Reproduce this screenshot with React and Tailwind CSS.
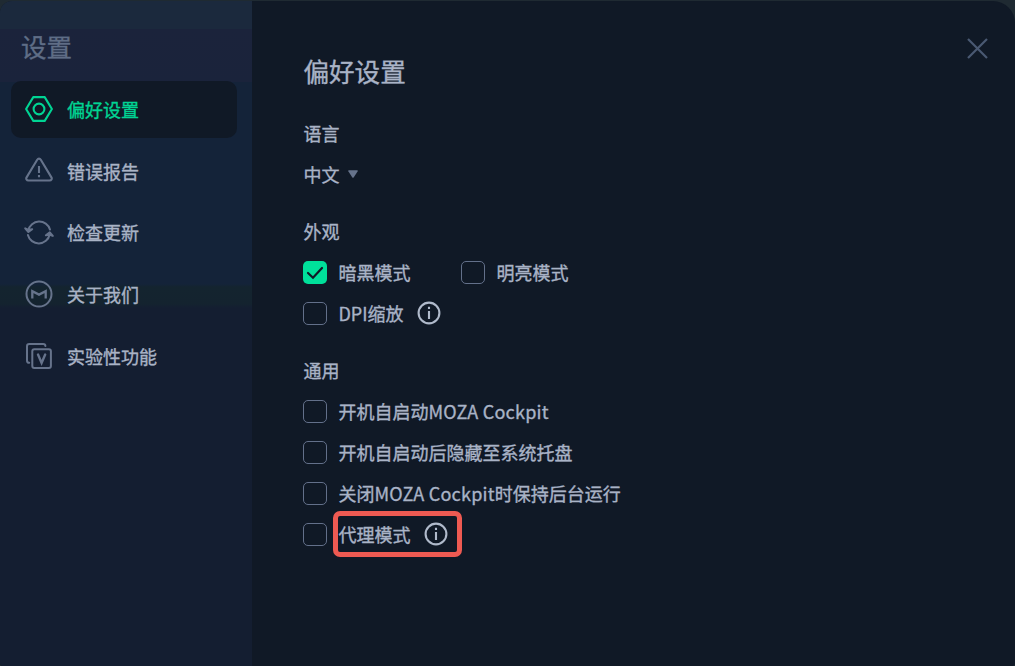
import { useState } from "react";

const MENU = [
  { id: "preferences", label: "偏好设置", Icon: HexIcon },
  { id: "report", label: "错误报告", Icon: WarningIcon },
  { id: "update", label: "检查更新", Icon: RefreshIcon },
  { id: "about", label: "关于我们", Icon: LogoIcon },
  { id: "labs", label: "实验性功能", Icon: LabsIcon },
];

function HexIcon() {
  return (
    <svg width="28" height="28" viewBox="0 0 28 28" fill="none" stroke="currentColor" strokeWidth="2.1" strokeLinejoin="round">
      <path d="M8.3 2.1h11.4L26.9 14l-7.2 11.9H8.3L1.1 14z" />
      <circle cx="14" cy="14" r="5.4" />
    </svg>
  );
}

function WarningIcon() {
  return (
    <svg width="28" height="28" viewBox="0 0 28 28" fill="none" stroke="currentColor" strokeWidth="2.1" strokeLinejoin="round">
      <path d="M12.2 2.7 1.6 20.4c-.9 1.5 0 3.1 1.8 3.1h21.2c1.8 0 2.7-1.6 1.8-3.1L15.8 2.7c-.9-1.4-2.7-1.4-3.6 0z" />
      <path d="M14 9.1v7M14 17.9v2.3" />
    </svg>
  );
}

function RefreshIcon() {
  return (
    <svg width="30" height="28" viewBox="0 0 30 28" fill="none" stroke="currentColor" strokeWidth="2" strokeLinecap="round" strokeLinejoin="round">
      <path d="M4.3 12.5A11.2 11.2 0 0 1 26 11.6" />
      <path d="M25.7 16.5A11.2 11.2 0 0 1 3.9 17" />
      <path d="M1.2 10.4 4.4 14l3.8-2.8-3.6.6z" fill="currentColor" />
      <path d="M28.8 17.9 25.8 14.4l-3.9 2.9 3.7-.6z" fill="currentColor" />
    </svg>
  );
}

function LogoIcon() {
  return (
    <svg width="28" height="28" viewBox="0 0 28 28" fill="none" stroke="currentColor" strokeWidth="2">
      <circle cx="14" cy="14" r="12.5" />
      <path d="M7.3 18.4v-7.2l6.7 3.4 6.7-3.4v7.2" strokeWidth="2.3" />
    </svg>
  );
}

function LabsIcon() {
  return (
    <svg width="28" height="28" viewBox="0 0 28 28" fill="none" stroke="currentColor" strokeWidth="2" strokeLinecap="round">
      <path d="M4.2 20.8c-1.5 0-2.2-.9-2.2-2.4V4.2C2 2.7 2.8 2 4.3 2h13.8c1.5 0 2.3.7 2.3 2.1" />
      <rect x="7.3" y="7.3" width="18.6" height="18.6" rx="2" />
      <path d="m13 12.5 3.6 8.4 3.6-8.4" strokeWidth="2.4" />
    </svg>
  );
}

function InfoIcon() {
  return (
    <svg width="24" height="24" viewBox="0 0 24 24" fill="none" stroke="currentColor" strokeWidth="2.1" className="mt-px text-[#b0bacb]">
      <circle cx="12" cy="12" r="10.4" />
      <path d="M12 10v8M12 5.8v2.3" />
    </svg>
  );
}

function Checkbox({ children, checked, onChange }) {
  return (
    <button onClick={onChange} className="flex h-[41px] items-center gap-[11px]">
      {checked ? (
        <span className="mt-[2px] flex h-[23px] w-[24px] items-center justify-center rounded-[5px] bg-[#00e09a]">
          <svg width="18" height="14" viewBox="0 0 18 14" fill="none" stroke="#101926" strokeWidth="2.2" strokeLinecap="round">
            <path d="m2 7 5 4.7L16 2" />
          </svg>
        </span>
      ) : (
        <span className="mt-[2px] h-[23px] w-[24px] rounded-[5px] border border-[#63708a]" />
      )}
      <span className="whitespace-pre">{children}</span>
    </button>
  );
}

function AppName() {
  return <span className="tracking-[0.22px]">MOZA Cockpit</span>;
}

export default function App() {
  const [active, setActive] = useState("preferences");
  const [options, setOptions] = useState({ dark: true });

  const toggle = (key) => setOptions({ ...options, [key]: !options[key] });

  return (
    <div className="h-[666px] w-[1015px] bg-[#1f2a32] pt-px font-['Noto_Sans_CJK_SC',sans-serif] text-[18px] leading-[26px] text-[#a9b3c6] [-webkit-text-stroke:0.35px]">
      <div className="flex h-full overflow-hidden rounded-tl-[12px] rounded-tr-[22px] rounded-b-[3px] bg-[#101926]">
        {/* Sidebar */}
        <aside className="w-[252px] shrink-0 bg-[linear-gradient(#1b293d_0,#1b293d_28px,#1b233b_28px,#1a233b_81px,#142339_81px,#142339_283px,#14242f_286px,#14232f_303px,#141e31_307px)] px-[11px]">
          <h1 className="flex h-[80px] items-center pl-[10px] pt-[9px] text-[25.5px] text-[#5f6d86]">
            设置
          </h1>
          <nav className="flex flex-col gap-[5px]">
            {MENU.map(({ id, label, Icon }) => (
              <button
                key={id}
                onClick={() => setActive(id)}
                className={`flex h-[56.6px] w-[226px] items-center rounded-[10px] ${
                  active === id ? "bg-[#101926] text-[#00d493]" : ""
                }`}
              >
                <span
                  className={`flex w-[56px] justify-center ${
                    active === id ? "" : "text-[#66738b]"
                  }`}
                >
                  <Icon />
                </span>
                <span>{label}</span>
              </button>
            ))}
          </nav>
        </aside>

        {/* Content */}
        <main className="flex-1 pl-[51.4px] pt-[51px]">
          <h2 className="text-[25.6px] leading-[38px]">偏好设置</h2>

          <h3 className="mt-[30px]">语言</h3>
          <button className="mt-[15px] flex items-center gap-[9px]">
            中文
            <svg width="10" height="8" viewBox="0 0 10 8" fill="#66738b">
              <path d="M.8.2h8.4q1 0 .5 1L5.8 7.2q-.8 1-1.6 0L.3 1.2Q-.2.2.8.2z" />
            </svg>
          </button>

          <h3 className="mt-[31px]">外观</h3>
          <div className="mt-[7px] flex gap-[51px]">
            <Checkbox checked={options.dark} onChange={() => toggle("dark")}>暗黑模式</Checkbox>
            <Checkbox checked={options.light} onChange={() => toggle("light")}>明亮模式</Checkbox>
          </div>
          <div className="flex items-center gap-[14px]">
            <Checkbox checked={options.dpi} onChange={() => toggle("dpi")}>DPI缩放</Checkbox>
            <InfoIcon />
          </div>

          <h3 className="mt-[24px]">通用</h3>
          <div className="mt-[7px]">
            <Checkbox checked={options.boot} onChange={() => toggle("boot")}>
              开机自启动<AppName />
            </Checkbox>
            <Checkbox checked={options.tray} onChange={() => toggle("tray")}>
              开机自启动后隐藏至系统托盘
            </Checkbox>
            <Checkbox checked={options.keep} onChange={() => toggle("keep")}>
              关闭<AppName />时保持后台运行
            </Checkbox>
            <div className="relative flex w-max items-center gap-[14px]">
              <Checkbox checked={options.proxy} onChange={() => toggle("proxy")}>代理模式</Checkbox>
              <InfoIcon />
              <span className="pointer-events-none absolute -right-[14px] -top-[2px] h-[46px] w-[129px] rounded-[7px] border-[5px] border-[#ee5a52]" />
            </div>
          </div>
        </main>

        {/* Close */}
        <button className="mr-[27px] mt-[37px] flex size-[21px] items-center justify-center self-start text-[#4a5972]">
          <svg width="21" height="21" viewBox="0 0 21 21" fill="none" stroke="currentColor" strokeWidth="2.2">
            <path d="m1 1 19 19M20 1 1 20" />
          </svg>
        </button>
      </div>
    </div>
  );
}
